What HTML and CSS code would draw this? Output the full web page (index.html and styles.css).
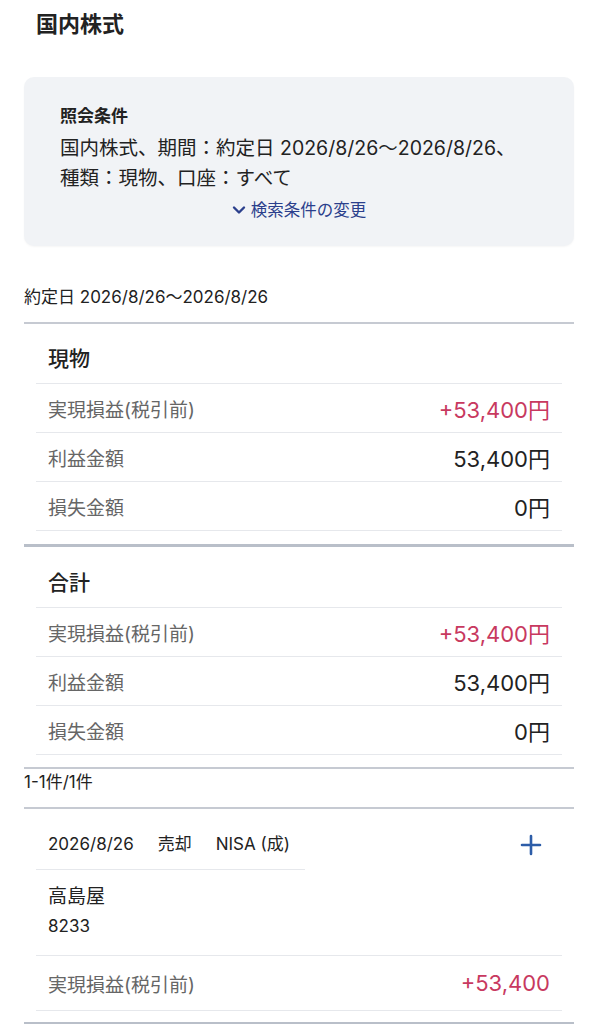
FILE: index.html
```html
<!DOCTYPE html>
<html lang="ja">
<head>
    <meta charset="UTF-8">
    <meta name="viewport" content="width=device-width, initial-scale=1.0">
    <title>国内株式</title>
    <link rel="stylesheet" href="styles.css">
</head>
<body>
    <h1 class="page-title">国内株式</h1>

    <div class="query-card">
        <div class="query-title">照会条件</div>
        <div class="query-text">国内株式、期間：約定日 2026/8/26〜2026/8/26、</div>
        <div class="query-text">種類：現物、口座：すべて</div>
        <div class="query-link">
            <svg width="14" height="10" viewBox="0 0 14 10"><path d="M2 2.5 L7 7.5 L12 2.5" fill="none" stroke="#2b3f8c" stroke-width="2.4" stroke-linecap="round" stroke-linejoin="round"/></svg>
            <span>検索条件の変更</span>
        </div>
    </div>

    <div class="period">約定日 2026/8/26〜2026/8/26</div>

    <div class="summary">
        <div class="summary-head">現物</div>
        <div class="row"><span class="label">実現損益(税引前)</span><span class="value plus">+53,400円</span></div>
        <div class="row"><span class="label">利益金額</span><span class="value">53,400円</span></div>
        <div class="row"><span class="label">損失金額</span><span class="value">0円</span></div>
    </div>

    <div class="summary total">
        <div class="summary-head">合計</div>
        <div class="row"><span class="label">実現損益(税引前)</span><span class="value plus">+53,400円</span></div>
        <div class="row"><span class="label">利益金額</span><span class="value">53,400円</span></div>
        <div class="row"><span class="label">損失金額</span><span class="value">0円</span></div>
    </div>

    <div class="count">1-1件/1件</div>

    <div class="trade">
        <div class="trade-head">
            <div class="trade-meta">
                <span>2026/8/26</span>
                <span>売却</span>
                <span>NISA (成)</span>
            </div>
            <svg class="plus-icon" width="22" height="22" viewBox="0 0 22 22"><path d="M11 2 V20 M2 11 H20" stroke="#2d5da8" stroke-width="2.6" stroke-linecap="round"/></svg>
        </div>
        <div class="stock">
            <div class="stock-name">高島屋</div>
            <div class="stock-code">8233</div>
        </div>
        <div class="row"><span class="label">実現損益(税引前)</span><span class="value plus">+53,400</span></div>
    </div>
</body>
</html>
```

FILE: styles.css
```css
body {
    margin: 0;
    font-family: Inter, "Noto Sans CJK JP", sans-serif;
    color: #222;
    background: #fff;
}
.page-title {
    margin: 0;
    padding: 10px 36px 0;
    font-size: 22px;
    line-height: 28px;
    font-weight: bold;
}
.query-card {
    margin: 39px 24px 0;
    padding: 26px 36px 23px;
    background: #f1f3f6;
    border-radius: 10px;
    box-shadow: 0 1px 2px rgba(0,0,0,0.04);
}
.query-title {
    font-size: 17px;
    line-height: 26px;
    font-weight: bold;
    margin-bottom: 4px;
}
.query-text {
    font-size: 19.5px;
    line-height: 30px;
}
.query-link {
    display: flex;
    justify-content: center;
    align-items: center;
    gap: 5px;
    margin-top: 4px;
    font-size: 16.5px;
    line-height: 26px;
    color: #2b3f8c;
}
.period {
    margin: 39px 24px 0;
    padding-bottom: 13px;
    font-size: 17px;
    line-height: 24px;
    border-bottom: 2px solid #c6cad2;
}
.summary {
    margin: 0 24px;
    padding: 0 12px 13px;
    border-bottom: 3px solid #b9bfc9;
}
.summary-head {
    padding: 21px 12px 10px;
    font-size: 21px;
    line-height: 28px;
    font-weight: 500;
    border-bottom: 1px solid #e6e8ec;
}
.total .summary-head {
    padding-top: 22px;
}
.total {
    border-bottom: 2px solid #c6cad2;
    padding-bottom: 12px;
}
.row {
    display: flex;
    justify-content: space-between;
    align-items: center;
    height: 48px;
    padding: 0 12px;
    border-bottom: 1px solid #e6e8ec;
}
.label {
    font-size: 19px;
    color: #666;
}
.value {
    font-size: 22px;
    color: #222;
}
.value.plus {
    color: #c8395f;
}
.count {
    margin: 0 24px;
    padding: 2px 0 14px;
    font-size: 17px;
    line-height: 22px;
    border-bottom: 2px solid #c6cad2;
}
.trade {
    margin: 0 24px;
    padding: 0 12px 11px;
    border-bottom: 2px solid #b9bfc9;
}
.trade-head {
    display: flex;
    justify-content: space-between;
    align-items: center;
    padding-top: 22px;
}
.trade-meta {
    display: flex;
    gap: 24px;
    width: 269px;
    padding: 0 12px 12px;
    box-sizing: border-box;
    font-size: 17px;
    line-height: 26px;
    border-bottom: 1px solid #e6e8ec;
}
.plus-icon {
    margin-right: 20px;
    margin-top: -12px;
}
.stock {
    padding: 14px 12px 17px;
    border-bottom: 1px solid #e6e8ec;
}
.stock-name {
    font-size: 19px;
    line-height: 26px;
}
.stock-code {
    font-size: 17px;
    line-height: 24px;
    margin-top: 4px;
}
.trade .row {
    height: 54px;
}
```
